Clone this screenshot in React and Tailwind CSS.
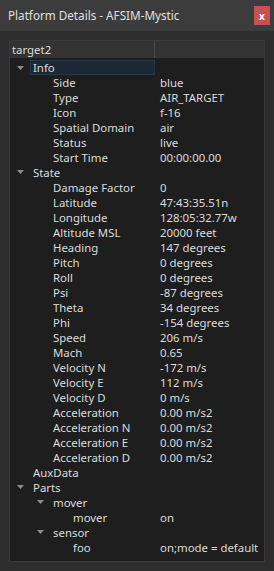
const TREE = [
  { name: "Info", depth: 0, open: true, selected: true },
  { name: "Side", value: "blue", depth: 1 },
  { name: "Type", value: "AIR_TARGET", depth: 1 },
  { name: "Icon", value: "f-16", depth: 1 },
  { name: "Spatial Domain", value: "air", depth: 1 },
  { name: "Status", value: "live", depth: 1 },
  { name: "Start Time", value: "00:00:00.00", depth: 1 },
  { name: "State", depth: 0, open: true },
  { name: "Damage Factor", value: "0", depth: 1 },
  { name: "Latitude", value: "47:43:35.51n", depth: 1 },
  { name: "Longitude", value: "128:05:32.77w", depth: 1 },
  { name: "Altitude MSL", value: "20000 feet", depth: 1 },
  { name: "Heading", value: "147 degrees", depth: 1 },
  { name: "Pitch", value: "0 degrees", depth: 1 },
  { name: "Roll", value: "0 degrees", depth: 1 },
  { name: "Psi", value: "-87 degrees", depth: 1 },
  { name: "Theta", value: "34 degrees", depth: 1 },
  { name: "Phi", value: "-154 degrees", depth: 1 },
  { name: "Speed", value: "206 m/s", depth: 1 },
  { name: "Mach", value: "0.65", depth: 1 },
  { name: "Velocity N", value: "-172 m/s", depth: 1 },
  { name: "Velocity E", value: "112 m/s", depth: 1 },
  { name: "Velocity D", value: "0 m/s", depth: 1 },
  { name: "Acceleration", value: "0.00 m/s2", depth: 1 },
  { name: "Acceleration N", value: "0.00 m/s2", depth: 1 },
  { name: "Acceleration E", value: "0.00 m/s2", depth: 1 },
  { name: "Acceleration D", value: "0.00 m/s2", depth: 1 },
  { name: "AuxData", depth: 0 },
  { name: "Parts", depth: 0, open: true },
  { name: "mover", depth: 1, open: true },
  { name: "mover", value: "on", depth: 2 },
  { name: "sensor", depth: 1, open: true },
  { name: "foo", value: "on;mode = default", depth: 2 },
];

const INDENT = ["pl-[23px]", "pl-[43px]", "pl-[63px]"];

function Arrow({ left }) {
  return (
    <svg width="7" height="4" viewBox="0 0 7 4" className={`absolute ${left} top-[5px]`}>
      <path d="M0 0 L7 0 L3.5 4 Z" fill="#8c8c8c" />
    </svg>
  );
}

function Row({ item }) {
  return (
    <div className="flex h-[15px] items-center">
      <div className={`w-[145px] shrink-0 ${INDENT[item.depth]} flex`}>
        <div
          className={`relative h-[15px] flex items-center ${
            item.selected ? "bg-[#1b2936] border border-[#22394d] -ml-[3px] pl-[2px] w-[127px]" : ""
          }`}
        >
          {item.open && !item.selected && <Arrow left="-left-[16px]" />}
          {item.selected && <Arrow left="-left-[14px]" />}
          <span className="whitespace-nowrap">{item.name}</span>
        </div>
      </div>
      {item.value && <div className="pl-[5px] whitespace-nowrap">{item.value}</div>}
    </div>
  );
}

export default function App() {
  return (
    <div
      className="w-[274px] h-[571px] bg-[#2d2d2e] flex flex-col text-[#dcdcdc] overflow-hidden"
      style={{ fontFamily: '"Noto Sans", "Open Sans", sans-serif' }}
    >
      <div className="h-[31px] shrink-0 bg-[#3c3c3c] flex items-center justify-between pl-[8px] pr-[4px]">
        <span className="text-[11.7px] leading-[15px] text-[#e0e0e0]">Platform Details - AFSIM-Mystic</span>
        <div className="w-[16px] h-[19px] bg-[#c75050] flex items-center justify-center text-white text-[10px] font-bold leading-none">
          x
        </div>
      </div>

      <div className="flex-1 px-[9px] pt-[9px] pb-[9px] flex">
        <div className="flex-1 bg-[#1e1e1e] border border-[#3a3a3a] flex flex-col text-[11.4px] leading-[14px]">
          <div className="h-[17px] shrink-0 bg-[#333333] flex">
            <div className="w-[145px] border-r border-[#4a4a4a] pl-[2px] flex items-center">target2</div>
            <div className="flex-1" />
          </div>
          <div className="pt-[2px]">
            {TREE.map((item, i) => (
              <Row key={i} item={item} />
            ))}
          </div>
        </div>
      </div>
    </div>
  );
}
